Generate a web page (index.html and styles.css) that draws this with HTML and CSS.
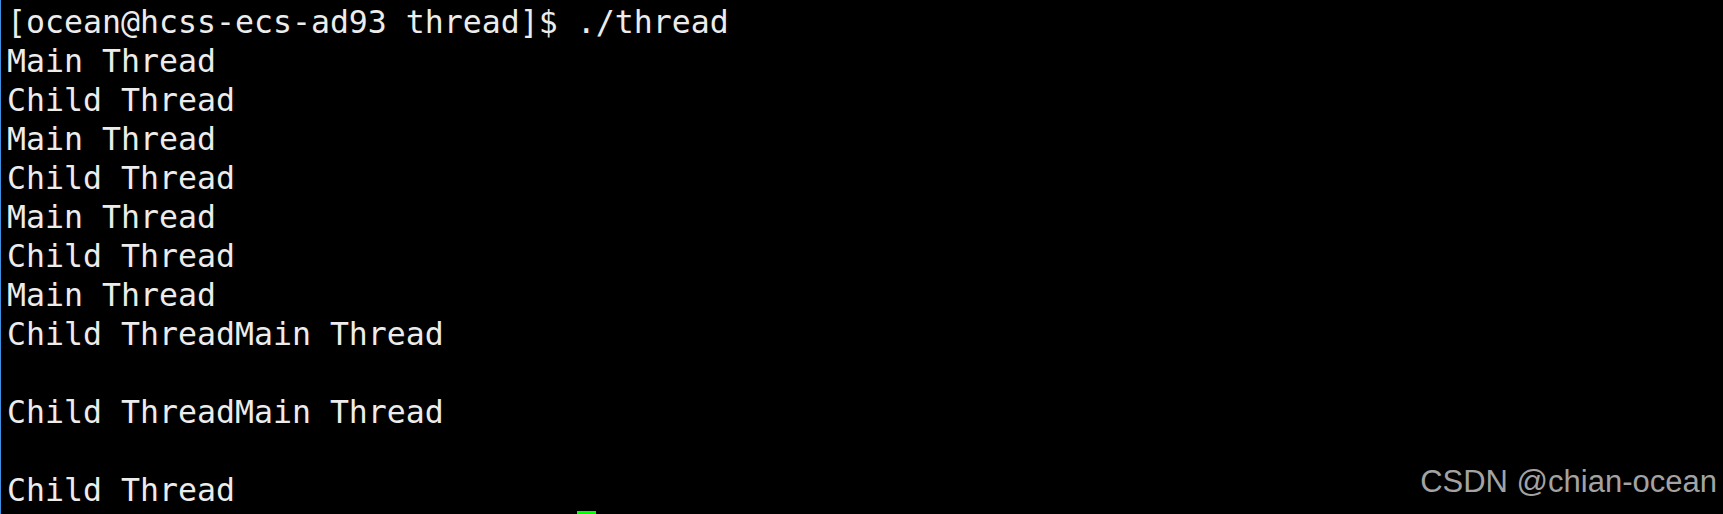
FILE: index.html
```html
<!DOCTYPE html>
<html>
<head>
<meta charset="utf-8">
<link rel="stylesheet" href="styles.css">
</head>
<body>
<div class="terminal">
<pre class="output">[ocean@hcss-ecs-ad93 thread]$ ./thread
Main Thread
Child Thread
Main Thread
Child Thread
Main Thread
Child Thread
Main Thread
Child ThreadMain Thread

Child ThreadMain Thread

Child Thread
<span class="pad">                              </span><span class="cursor"> </span></pre>
<div class="watermark">CSDN @chian-ocean</div>
</div>
</body>
</html>
```
FILE: styles.css
```css
html, body {
  margin: 0;
  padding: 0;
  background: #000;
}
.terminal {
  position: relative;
  width: 1723px;
  height: 514px;
  overflow: hidden;
  background: #000;
  border-left: 1px solid #3d8fe0;
  box-sizing: border-box;
}
.output {
  margin: 0;
  padding: 3px 0 0 6px;
  font-family: "DejaVu Sans Mono", monospace;
  font-size: 31.55px;
  line-height: 39px;
  color: #ececec;
  white-space: pre;
}
.cursor {
  background: #00ff00;
}
.watermark {
  position: absolute;
  right: 6px;
  bottom: 14px;
  font-family: "Liberation Sans", Arial, sans-serif;
  font-size: 31px;
  line-height: 36px;
  color: #a3a3a3;
}
```
